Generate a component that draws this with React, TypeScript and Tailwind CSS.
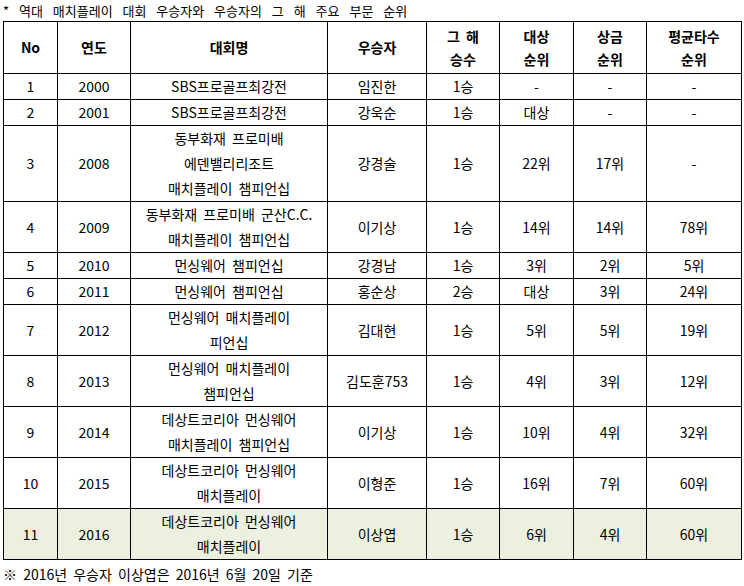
import React from "react";

type Row = [string, string, string[], string, string, string, string, string];

const rows: Row[] = [
  ["1", "2000", ["SBS프로골프최강전"], "임진한", "1승", "-", "-", "-"],
  ["2", "2001", ["SBS프로골프최강전"], "강욱순", "1승", "대상", "-", "-"],
  ["3", "2008", ["동부화재 프로미배", "에덴밸리리조트", "매치플레이 챔피언십"], "강경술", "1승", "22위", "17위", "-"],
  ["4", "2009", ["동부화재 프로미배 군산C.C.", "매치플레이 챔피언십"], "이기상", "1승", "14위", "14위", "78위"],
  ["5", "2010", ["먼싱웨어 챔피언십"], "강경남", "1승", "3위", "2위", "5위"],
  ["6", "2011", ["먼싱웨어 챔피언십"], "홍순상", "2승", "대상", "3위", "24위"],
  ["7", "2012", ["먼싱웨어 매치플레이", "피언십"], "김대현", "1승", "5위", "5위", "19위"],
  ["8", "2013", ["먼싱웨어 매치플레이", "챔피언십"], "김도훈753", "1승", "4위", "3위", "12위"],
  ["9", "2014", ["데상트코리아 먼싱웨어", "매치플레이 챔피언십"], "이기상", "1승", "10위", "4위", "32위"],
  ["10", "2015", ["데상트코리아 먼싱웨어", "매치플레이"], "이형준", "1승", "16위", "7위", "60위"],
  ["11", "2016", ["데상트코리아 먼싱웨어", "매치플레이"], "이상엽", "1승", "6위", "4위", "60위"],
];

const td = "border border-black p-0 text-center align-middle leading-[25px] font-normal";
const th = "border border-black p-0 text-center align-middle leading-[23px] font-bold";

export default function App() {
  return (
    <div className="w-[744px] h-[586px] bg-white text-black text-[14px] [word-spacing:3px] [font-family:'Noto_Sans_CJK_KR',sans-serif]">
      <div className="h-[21px] leading-[21px] pl-[3px] text-[13px] [word-spacing:7px]">* 역대 매치플레이 대회 우승자와 우승자의 그 해 주요 부문 순위</div>
      <table className="ml-[3px] w-[738px] table-fixed border-collapse">
        <colgroup>
          <col className="w-[54px]" />
          <col className="w-[73px]" />
          <col className="w-[197px]" />
          <col className="w-[99px]" />
          <col className="w-[73px]" />
          <col className="w-[74px]" />
          <col className="w-[73px]" />
          <col className="w-[95px]" />
        </colgroup>
        <thead>
          <tr className="h-[52px]">
            <th className={th}>No</th>
            <th className={th}>연도</th>
            <th className={th}>대회명</th>
            <th className={th}>우승자</th>
            <th className={th}>
              <div>그 해</div>
              <div>승수</div>
            </th>
            <th className={th}>
              <div>대상</div>
              <div>순위</div>
            </th>
            <th className={th}>
              <div>상금</div>
              <div>순위</div>
            </th>
            <th className={th}>
              <div>평균타수</div>
              <div>순위</div>
            </th>
          </tr>
        </thead>
        <tbody>
          {rows.map((r, i) => (
            <tr key={i} className={i === 10 ? "bg-[#ebf1de]" : ""}>
              <td className={td}>{r[0]}</td>
              <td className={td}>{r[1]}</td>
              <td className={td}>
                {r[2].map((l, j) => (
                  <div key={j}>{l}</div>
                ))}
              </td>
              <td className={td}>{r[3]}</td>
              <td className={td}>{r[4]}</td>
              <td className={td}>{r[5]}</td>
              <td className={td}>{r[6]}</td>
              <td className={td}>{r[7]}</td>
            </tr>
          ))}
        </tbody>
      </table>
      <div className="pl-[3px] pt-[3px] leading-[22px]">※ 2016년 우승자 이상엽은 2016년 6월 20일 기준</div>
    </div>
  );
}
